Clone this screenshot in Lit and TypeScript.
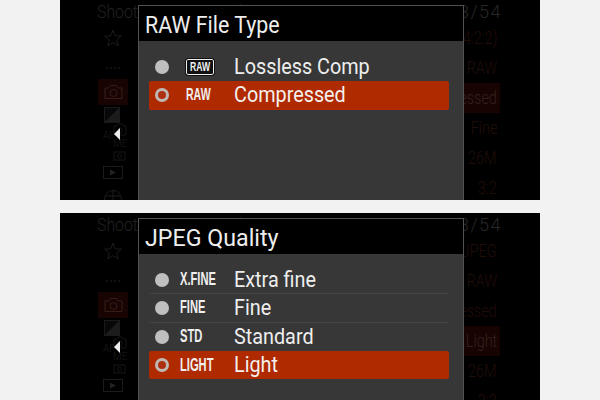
import { LitElement, html, css, svg } from "lit";
import { customElement, property } from "lit/decorators.js";

type Row = { label: string; badge: string; boxed?: boolean; selected?: boolean };

const dimIcons = {
  star: svg`<polygon points="9,1 11.2,6.8 17.4,7.1 12.6,11 14.2,17 9,13.6 3.8,17 5.4,11 .6,7.1 6.8,6.8" fill="none" stroke="#1c1c1c" stroke-width="1"/>`,
  camera: svg`<path d="M1 3h4l1.5-2.5h6L14 3h4v10.500H1z" fill="none" stroke="#3a1c17" stroke-width="1"/><circle cx="9.500" cy="8" r="3.500" fill="none" stroke="#3a1c17" stroke-width="1"/>`,
  exposure: svg`<rect x=".5" y=".5" width="15" height="15" fill="#080808" stroke="#1a1a1a"/><path d="M1 15 15 1v14z" fill="#1c1c1c"/>`,
  mini: svg`<path d="M1 3h3l1-2h4l1 2h3v9H1z" fill="none" stroke="#161616"/><circle cx="7" cy="7.500" r="2.500" fill="none" stroke="#161616"/>`,
  box: svg`<rect x="1" y="1" width="11" height="8" fill="none" stroke="#161616"/><circle cx="6.500" cy="5" r="2" fill="none" stroke="#161616"/>`,
  play: svg`<rect x=".5" y=".5" width="19" height="12" fill="none" stroke="#1c1c1c" stroke-width="1"/><path d="M7 3.500l6 3-6 3z" fill="#222"/>`,
  globe: svg`<circle cx="9" cy="9" r="8.500" fill="none" stroke="#1c1c1c" stroke-width="1"/><path d="M1 6h16M1 12h16M9 .5v17" stroke="#1c1c1c"/>`,
};

@customElement("menu-screen")
class MenuScreen extends LitElement {
  @property() heading = "";
  @property({ type: Number }) headingScale = 1;
  @property({ type: Array }) rows: Row[] = [];
  @property({ type: Array }) side: string[] = [];
  @property({ type: Number }) active = 3;

  static styles = css`
    :host {
      display: block;
      font-family: Roboto, "Liberation Sans", sans-serif;
    }
    .screen {
      position: relative;
      width: 480px;
      height: 200px;
      overflow: hidden;
      background: #000;
    }
    .bg-top {
      display: flex;
      justify-content: space-between;
      padding: 0 38px 0 37px;
      height: 23px;
      align-items: center;
      color: #222;
      font-size: 18px;
      font-weight: 300;
      white-space: nowrap;
    }
    .bg-top .shoot {
      display: inline-block;
      transform: scaleX(0.88);
      transform-origin: left center;
    }
    .bg-top .count {
      letter-spacing: 1.5px;
      color: #282828;
    }
    .bg {
      display: flex;
      justify-content: space-between;
    }
    .left {
      width: 78px;
      display: flex;
      flex-direction: column;
      align-items: center;
      padding-left: 28px;
      box-sizing: border-box;
    }
    .star {
      height: 30px;
      display: flex;
      align-items: center;
    }
    .dots {
      margin-top: 14px;
      height: 5px;
      width: 14px;
      border-top: 2px dotted #111;
      box-sizing: border-box;
    }
    .tab {
      margin-top: 7px;
      width: 30px;
      height: 26px;
      background: #170403;
      display: flex;
      align-items: center;
      justify-content: center;
      flex: none;
    }
    .exp {
      margin-top: 2px;
      height: 16px;
      margin-right: 2px;
    }
    .cluster {
      width: 30px;
      height: 43px;
      display: flex;
      box-sizing: border-box;
      padding-left: 5px;
      color: #1c1c1c;
      font-size: 10px;
      font-weight: 300;
      flex: none;
    }
    .af {
      width: 10px;
      padding-top: 7px;
    }
    .stack {
      display: flex;
      flex-direction: column;
      gap: 1px;
    }
    .me { height: 12px; line-height: 12px; padding-top: 1px; }
    .play { height: 13px; }
    .globe { margin-top: 11px; }
    svg { display: block; }
    .arrow {
      position: absolute;
      left: 54px;
      top: 128px;
      width: 6px;
      height: 12px;
      background: #eee;
      clip-path: polygon(100% 0, 100% 100%, 0 50%);
    }
    .right {
      width: 100px;
      box-sizing: border-box;
      margin-right: 40px;
      font-size: 18px;
      font-weight: 300;
      color: #210d08;
      text-align: right;
    }
    .right div {
      height: 30px;
      line-height: 30px;
      padding-right: 3px;
      white-space: nowrap;
    }
    .right div span {
      display: inline-block;
      transform: scaleX(0.8);
      transform-origin: right center;
    }
    .right .on {
      background: #170402;
      color: #33211c;
    }
    .dialog {
      position: absolute;
      left: 78px;
      top: 5px;
      width: 326px;
      bottom: 0;
      box-sizing: border-box;
      border: 1px solid #525252;
      border-bottom: none;
      background: #373737;
      display: flex;
      flex-direction: column;
    }
    .title {
      background: #000;
      height: 35px;
      box-sizing: border-box;
      padding: 3px 0 0 6px;
      line-height: 34px;
      color: #eee;
      font-size: 23px;
      font-weight: 400;
      flex: none;
      white-space: nowrap;
    }
    .title span {
      display: inline-block;
      transform-origin: left center;
    }
    .list {
      padding: 12px 14px 0 10px;
    }
    .row {
      display: flex;
      align-items: center;
      height: 28.3px;
      box-sizing: border-box;
      border-bottom: 1px solid #444;
      color: #eee;
      font-size: 22.5px;
      border-radius: 2px;
    }
    .row.last { border-bottom: none; }
    .row.sel {
      background: #b02a00;
      border-bottom: none;
      color: #f4f0ee;
    }
    .label {
      display: inline-block;
      transform: scaleX(0.88);
      transform-origin: left center;
      padding-bottom: 2px;
      white-space: nowrap;
    }
    .dot {
      width: 14px;
      height: 14px;
      border-radius: 50%;
      background: #bfbfbf;
      margin-left: 6px;
      flex: none;
      box-sizing: border-box;
    }
    .sel .dot {
      background: #ad3010;
      border: 3px solid #c0b8b4;
    }
    .badge-wrap {
      width: 65px;
      padding-left: 11px;
      box-sizing: border-box;
      flex: none;
      display: flex;
    }
    .badge {
      font-family: "Liberation Sans", sans-serif;
      font-weight: 700;
      font-size: 18px;
      color: #efefef;
      white-space: nowrap;
      display: inline-block;
      transform: scaleX(0.62);
      transform-origin: left center;
    }
    .badge.raw {
      margin-left: 6px;
      font-size: 17px;
    }
    .frame {
      margin-left: 6px;
      width: 28px;
      height: 16px;
      box-sizing: border-box;
      border: 1.5px solid #eee;
      border-radius: 2px;
      background: #111;
      outline: 1px solid #111;
      display: flex;
      align-items: center;
      padding-left: 3px;
      overflow: hidden;
    }
    .frame .badge {
      font-size: 12px;
      transform: scaleX(0.72);
    }
  `;

  render() {
    return html`
      <div class="screen">
        <div class="bg-top"><span class="shoot">Shooting Image Quality</span><span class="count">3/54</span></div>
        <div class="bg">
          <div class="left">
            <div class="star"><svg width="18" height="18" viewBox="0 0 18 18">${dimIcons.star}</svg></div>
            <div class="dots"></div>
            <div class="tab"><svg width="19" height="14" viewBox="0 0 19 14">${dimIcons.camera}</svg></div>
            <div class="exp"><svg width="16" height="16" viewBox="0 0 16 16">${dimIcons.exposure}</svg></div>
            <div class="cluster">
              <div class="af">AF</div>
              <div class="stack">
                <svg width="14" height="13" viewBox="0 0 14 13">${dimIcons.mini}</svg>
                <div class="me">ME</div>
                <svg width="13" height="10" viewBox="0 0 13 10">${dimIcons.box}</svg>
              </div>
            </div>
            <div class="play"><svg width="20" height="13" viewBox="0 0 20 13">${dimIcons.play}</svg></div>
            <div class="globe"><svg width="18" height="18" viewBox="0 0 18 18">${dimIcons.globe}</svg></div>
          </div>
          <div class="right">
            ${this.side.map((s, i) => html`<div class=${i === this.active ? "on" : ""}><span>${s}</span></div>`)}
          </div>
        </div>
        <div class="arrow"></div>
        <div class="dialog">
          <div class="title"><span style="transform: scaleX(${this.headingScale})">${this.heading}</span></div>
          <div class="list">
            ${this.rows.map(
              (r, i) => html`
                <div class="row ${r.selected ? "sel" : ""} ${i === this.rows.length - 2 || r.selected ? "last" : ""}">
                  <span class="dot"></span>
                  <span class="badge-wrap">
                    ${r.boxed
                      ? html`<span class="frame"><span class="badge">${r.badge}</span></span>`
                      : html`<span class="badge ${r.badge === "RAW" ? "raw" : ""}">${r.badge}</span>`}
                  </span>
                  <span class="label">${r.label}</span>
                </div>
              `
            )}
          </div>
        </div>
      </div>
    `;
  }
}

@customElement("app-root")
export class AppRoot extends LitElement {
  static styles = css`
    :host {
      display: block;
      width: 600px;
      height: 400px;
      overflow: hidden;
      background: #f2f2f2;
    }
    .wrap {
      display: flex;
      flex-direction: column;
      gap: 13px;
      padding-left: 60px;
    }
  `;

  render() {
    const rawRows: Row[] = [
      { label: "Lossless Comp", badge: "RAW", boxed: true },
      { label: "Compressed", badge: "RAW", selected: true },
    ];
    const jpegRows: Row[] = [
      { label: "Extra fine", badge: "X.FINE" },
      { label: "Fine", badge: "FINE" },
      { label: "Standard", badge: "STD" },
      { label: "Light", badge: "LIGHT", selected: true },
    ];
    return html`
      <div class="wrap">
        <menu-screen
          heading="RAW File Type"
          .headingScale=${0.93}
          .rows=${rawRows}
          .side=${["4:2:2)", "RAW", "essed", "Fine", "26M", "3:2"]}
          .active=${2}
        ></menu-screen>
        <menu-screen
          heading="JPEG Quality"
          .headingScale=${1.01}
          .rows=${jpegRows}
          .side=${["JPEG", "RAW", "essed", "Light", "26M", "3:2"]}
          .active=${3}
        ></menu-screen>
      </div>
    `;
  }
}
